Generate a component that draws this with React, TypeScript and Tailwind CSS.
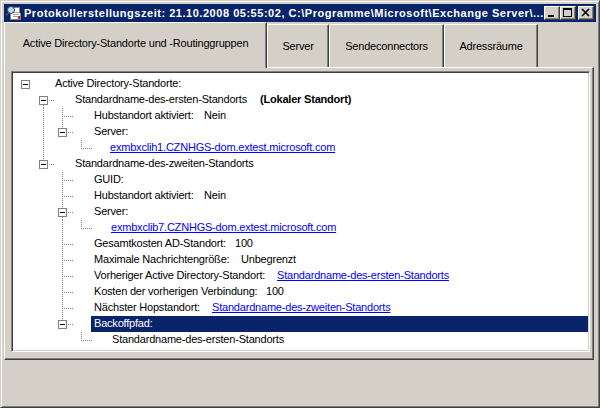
import React from "react";

type Row = {
  w: number;
  full?: number[];
  leaf?: number;
  leafLast?: number;
  box?: { x: number; above?: boolean; below?: boolean };
  h?: [number, number];
  content: React.ReactNode;
  highlight?: boolean;
};

const G = "#808080";

function Gutter({ r }: { r: Row }) {
  const els: React.ReactNode[] = [];
  let k = 0;
  const vline = (x: number, y1: number, y2: number) =>
    els.push(
      <line key={k++} x1={x + 0.5} x2={x + 0.5} y1={y1} y2={y2} stroke={G} strokeWidth={1} strokeDasharray="1 1" />
    );
  const hline = (x1: number, x2: number) =>
    els.push(
      <line key={k++} x1={x1} x2={x2} y1={8.5} y2={8.5} stroke={G} strokeWidth={1} strokeDasharray="1 1" />
    );
  (r.full || []).forEach((x) => vline(x, 0, 16));
  if (r.leaf !== undefined) {
    vline(r.leaf, 0, 16);
    hline(r.leaf + 2, r.leaf + 11);
  }
  if (r.leafLast !== undefined) {
    vline(r.leafLast, 0, 9);
    hline(r.leafLast + 2, r.leafLast + 11);
  }
  if (r.box) {
    const x = r.box.x;
    if (r.box.above) vline(x, 0, 4);
    if (r.box.below) vline(x, 13, 16);
    if (r.h) hline(r.h[0], r.h[1]);
    els.push(
      <rect key={k++} x={x - 4 + 0.5} y={4.5} width={8} height={8} fill="#ffffff" stroke={G} strokeWidth={1} />
    );
    els.push(<line key={k++} x1={x - 2} x2={x + 3} y1={8.5} y2={8.5} stroke="#000000" strokeWidth={1} />);
  }
  return (
    <svg width={r.w} height={16} className="shrink-0" shapeRendering="crispEdges">
      {els}
    </svg>
  );
}

const Link = ({ children }: { children: React.ReactNode }) => (
  <span className="text-[#0000ff] underline underline-offset-[1px]">{children}</span>
);

const L = ({ w, children }: { w: number; children: React.ReactNode }) => (
  <span className="inline-block shrink-0" style={{ width: w }}>
    {children}
  </span>
);

const rows: Row[] = [
  { w: 42, box: { x: 12 }, content: "Active Directory-Standorte:" },
  {
    w: 62,
    box: { x: 30, below: true },
    h: [34, 41],
    content: (
      <>
        <L w={185}>Standardname-des-ersten-Standorts</L>
        <span className="font-bold">(Lokaler Standort)</span>
      </>
    ),
  },
  {
    w: 81,
    full: [30],
    leaf: 49,
    content: (
      <>
        <L w={110}>Hubstandort aktiviert:</L>
        <span>Nein</span>
      </>
    ),
  },
  { w: 81, full: [30], box: { x: 49, above: true }, h: [53, 60], content: "Server:" },
  { w: 97, full: [30], leafLast: 68, content: <Link>exmbxclih1.CZNHGS-dom.extest.microsoft.com</Link> },
  { w: 62, box: { x: 30, above: true }, h: [34, 41], content: "Standardname-des-zweiten-Standorts" },
  { w: 81, leaf: 49, content: "GUID:" },
  {
    w: 81,
    leaf: 49,
    content: (
      <>
        <L w={110}>Hubstandort aktiviert:</L>
        <span>Nein</span>
      </>
    ),
  },
  { w: 81, box: { x: 49, above: true, below: true }, full: [], h: [53, 60], content: "Server:" },
  { w: 98, full: [49], leafLast: 68, content: <Link>exmbxclib7.CZNHGS-dom.extest.microsoft.com</Link> },
  {
    w: 81,
    leaf: 49,
    content: (
      <>
        <L w={141}>Gesamtkosten AD-Standort:</L>
        <span>100</span>
      </>
    ),
  },
  {
    w: 81,
    leaf: 49,
    content: (
      <>
        <L w={147}>Maximale Nachrichtengröße:</L>
        <span>Unbegrenzt</span>
      </>
    ),
  },
  {
    w: 81,
    leaf: 49,
    content: (
      <>
        <L w={183}>Vorheriger Active Directory-Standort:</L>
        <Link>Standardname-des-ersten-Standorts</Link>
      </>
    ),
  },
  {
    w: 81,
    leaf: 49,
    content: (
      <>
        <L w={172}>Kosten der vorherigen Verbindung:</L>
        <span>100</span>
      </>
    ),
  },
  {
    w: 81,
    leaf: 49,
    content: (
      <>
        <L w={118}>Nächster Hopstandort:</L>
        <Link>Standardname-des-zweiten-Standorts</Link>
      </>
    ),
  },
  { w: 78, box: { x: 49, above: true }, h: [53, 60], highlight: true, content: "Backoffpfad:" },
  { w: 99, leafLast: 68, content: "Standardname-des-ersten-Standorts" },
];

function TitleIcon() {
  return (
    <svg width="16" height="16" viewBox="0 0 16 16" className="shrink-0" shapeRendering="crispEdges">
      <path d="M4 3 L13 2 L15 14 L5 15 Z" fill="#ffffff" stroke="#808080" />
      <line x1="7" y1="8" x2="13" y2="7" stroke="#a0a0a0" />
      <line x1="7" y1="10" x2="13" y2="9" stroke="#a0a0a0" />
      <line x1="7" y1="12" x2="13" y2="11" stroke="#a0a0a0" />
      <rect x="12" y="11" width="2" height="3" fill="#d02020" />
      <circle cx="5" cy="5" r="3.5" fill="#bcd8f0" stroke="#404060" shapeRendering="auto" />
      <line x1="2" y1="8" x2="0" y2="11" stroke="#404060" strokeWidth="2" shapeRendering="auto" />
    </svg>
  );
}

function WinButton({ kind }: { kind: "min" | "max" | "close" }) {
  return (
    <div className="w-[16px] h-[14px] bg-[#d4d0c8] border border-t-white border-l-white border-r-[#404040] border-b-[#404040] shadow-[inset_-1px_-1px_#808080] flex items-center justify-center">
      <svg width="14" height="12" viewBox="0 0 14 12" shapeRendering="crispEdges">
        {kind === "min" && <rect x="3" y="8" width="6" height="2" fill="#000" />}
        {kind === "max" && (
          <>
            <rect x="2.5" y="1.5" width="8" height="8" fill="none" stroke="#000" />
            <rect x="2" y="2" width="9" height="1" fill="#000" />
          </>
        )}
        {kind === "close" && (
          <path d="M3 2 L10 9 M10 2 L3 9" stroke="#000" strokeWidth="1.6" shapeRendering="auto" />
        )}
      </svg>
    </div>
  );
}

export default function App() {
  return (
    <div
      className="w-[600px] h-[408px] bg-[#d4d0c8] border border-t-[#d4d0c8] border-l-[#d4d0c8] border-r-[#404040] border-b-[#404040] shadow-[inset_1px_1px_#ffffff,inset_-1px_-1px_#808080] p-[3px] flex flex-col text-[11px] text-black overflow-hidden"
      style={{ fontFamily: '"Liberation Sans", Arial, sans-serif' }}
    >
      {/* Title bar */}
      <div className="h-[18px] bg-[#0a246a] flex items-center pl-[2px] pr-[2px] shrink-0">
        <TitleIcon />
        <div className="ml-[2px] flex-1 text-white font-bold text-[11px] leading-[18px] tracking-[0.53px] whitespace-nowrap overflow-hidden">
          Protokollerstellungszeit: 21.10.2008 05:55:02, C:\Programme\Microsoft\Exchange Server\...
        </div>
        <div className="flex items-center">
          <WinButton kind="min" />
          <WinButton kind="max" />
          <div className="w-[2px]" />
          <WinButton kind="close" />
        </div>
      </div>

      {/* Tabs */}
      <div className="flex items-end h-[45px] relative z-10 shrink-0 tracking-[-0.2px]">
        <div className="w-[263px] h-[46px] -mb-px bg-[#d4d0c8] border-l border-t border-r border-l-white border-t-white border-r-[#404040] shadow-[inset_-1px_0_#808080] flex items-center justify-center pb-[4px]">
          Active Directory-Standorte und -Routinggruppen
        </div>
        <div className="w-[62px] h-[43px] border-l border-t border-r border-l-white border-t-white border-r-[#404040] shadow-[inset_-1px_0_#808080] flex items-center justify-center">
          Server
        </div>
        <div className="w-[115px] h-[43px] border-l border-t border-r border-l-white border-t-white border-r-[#404040] shadow-[inset_-1px_0_#808080] flex items-center justify-center">
          Sendeconnectors
        </div>
        <div className="w-[94px] h-[43px] border-l border-t border-r border-l-white border-t-white border-r-[#404040] shadow-[inset_-1px_0_#808080] flex items-center justify-center">
          Adressräume
        </div>
      </div>

      {/* Tab page */}
      <div className="w-[590px] h-[293px] shrink-0 border border-t-white border-l-white border-r-[#404040] border-b-[#404040] shadow-[inset_-1px_-1px_#808080] pt-[3px] pl-[6px]">
        <div className="w-[579px] h-[281px] bg-white border border-t-[#808080] border-l-[#808080] border-r-white border-b-white shadow-[inset_1px_1px_#404040,inset_-1px_-1px_#d4d0c8] p-[1px] pt-[4px] overflow-hidden tracking-[-0.2px]">
          {rows.map((r, i) => (
            <div key={i} className="h-[16px] flex items-center whitespace-nowrap leading-[14px]">
              <Gutter r={r} />
              {r.highlight ? (
                <div className="flex-1 h-[16px] bg-[#0a246a] text-white pl-[3px] flex items-center pb-[2px]">
                  {r.content}
                </div>
              ) : (
                <div className="flex items-center h-[16px] pb-[2px]">{r.content}</div>
              )}
            </div>
          ))}
        </div>
      </div>
    </div>
  );
}
